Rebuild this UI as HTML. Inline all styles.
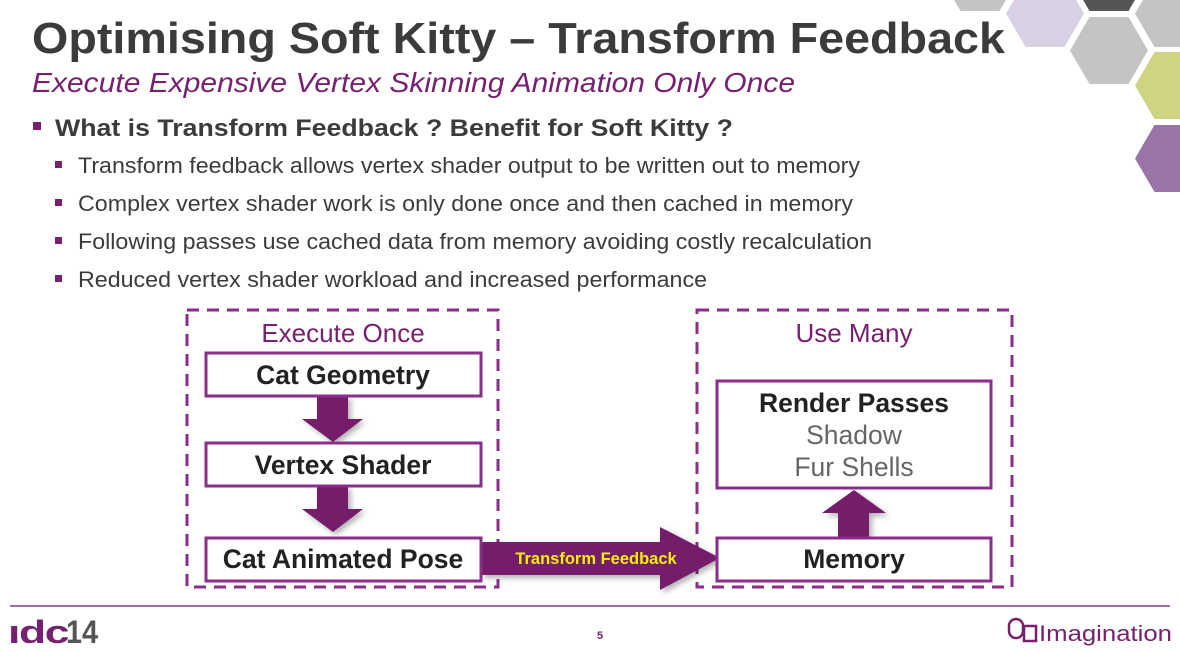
<!DOCTYPE html>
<html><head><meta charset="utf-8"><style>
html,body{margin:0;padding:0;background:#fff;}
svg{display:block;font-family:"Liberation Sans",Arial,sans-serif;}
</style></head><body>
<svg width="1180" height="652" viewBox="0 0 1180 652" xmlns="http://www.w3.org/2000/svg">
<defs>
<polygon id="hx" points="19.5,0 58.5,0 78,33.5 58.5,67 19.5,67 0,33.5"/>
<filter id="sh" x="-30%" y="-30%" width="160%" height="160%"><feDropShadow dx="3" dy="3" stdDeviation="3" flood-color="#000" flood-opacity="0.3"/></filter>
</defs>
<use href="#hx" x="941" y="-56" fill="#c4c4c4"/>
<use href="#hx" x="1006" y="-20" fill="#d9d0e3"/>
<use href="#hx" x="1070" y="-56" fill="#555"/>
<use href="#hx" x="1070" y="17" fill="#c4c4c4"/>
<use href="#hx" x="1135" y="-20" fill="#c4c4c4"/>
<use href="#hx" x="1135" y="52" fill="#cfd483"/>
<use href="#hx" x="1135" y="125" fill="#9974a8"/>

<text x="32" y="53" font-size="44" font-weight="bold" fill="#3b3b3b" textLength="973" lengthAdjust="spacingAndGlyphs">Optimising Soft Kitty – Transform Feedback</text>
<text x="32" y="92" font-size="28" font-style="italic" fill="#76206f" textLength="763" lengthAdjust="spacingAndGlyphs">Execute Expensive Vertex Skinning Animation Only Once</text>
<rect x="33" y="122" width="8" height="8" fill="#76206f"/>
<text x="55" y="136" font-size="24" font-weight="bold" fill="#3b3b3b" textLength="678" lengthAdjust="spacingAndGlyphs">What is Transform Feedback ? Benefit for Soft Kitty ?</text>
<g fill="#76206f"><rect x="55" y="161" width="7" height="7"/><rect x="55" y="199" width="7" height="7"/><rect x="55" y="237" width="7" height="7"/><rect x="55" y="275" width="7" height="7"/></g>
<g font-size="22" fill="#3b3b3b">
<text x="78" y="173" textLength="782" lengthAdjust="spacingAndGlyphs">Transform feedback allows vertex shader output to be written out to memory</text>
<text x="78" y="211" textLength="775" lengthAdjust="spacingAndGlyphs">Complex vertex shader work is only done once and then cached in memory</text>
<text x="78" y="249" textLength="794" lengthAdjust="spacingAndGlyphs">Following passes use cached data from memory avoiding costly recalculation</text>
<text x="78" y="287" textLength="629" lengthAdjust="spacingAndGlyphs">Reduced vertex shader workload and increased performance</text>
</g>

<g fill="none" stroke="#8a2e8a" stroke-width="3" stroke-dasharray="12,8">
<rect x="187" y="310" width="311" height="277"/>
<rect x="697" y="310" width="315" height="277"/>
</g>
<text x="343" y="342" font-size="26" fill="#76206f" text-anchor="middle">Execute Once</text>
<text x="854" y="342" font-size="26" fill="#76206f" text-anchor="middle">Use Many</text>

<g fill="#741a6b" filter="url(#sh)">
<polygon points="317,396 348,396 348,419 363,419 333,442 302,419 317,419"/>
<polygon points="317,486 348,486 348,509 363,509 333,532 302,509 317,509"/>
<polygon points="481,542 660,542 660,527 720,558 660,590 660,575 481,575"/>
<polygon points="838,537 869,537 869,513 886,513 854,490 822,513 838,513"/>
</g>
<text x="596" y="564" font-size="16.5" font-weight="bold" fill="#f5f000" text-anchor="middle">Transform Feedback</text>

<g fill="#fff" stroke="#8a2e8a" stroke-width="3">
<rect x="206" y="353" width="275" height="43"/>
<rect x="206" y="443" width="275" height="43"/>
<rect x="206" y="538" width="275" height="43"/>
<rect x="717" y="381" width="274" height="107"/>
<rect x="717" y="538" width="274" height="43"/>
</g>
<g font-size="26.5" font-weight="bold" fill="#222" text-anchor="middle">
<text x="343" y="384">Cat Geometry</text>
<text x="343" y="474">Vertex Shader</text>
<text x="343" y="568">Cat Animated Pose</text>
<text x="854" y="412">Render Passes</text>
<text x="854" y="568">Memory</text>
</g>
<g font-size="26.5" fill="#666" text-anchor="middle">
<text x="854" y="444">Shadow</text>
<text x="854" y="476">Fur Shells</text>
</g>

<line x1="10" y1="606" x2="1170" y2="606" stroke="#8a3a8a" stroke-width="1.5"/>
<text x="8" y="643" font-size="32" font-weight="bold" fill="#76206f" textLength="60" lengthAdjust="spacingAndGlyphs" letter-spacing="-1">ıdc</text>
<text x="66" y="643" font-size="32" font-weight="bold" fill="#555" textLength="32" lengthAdjust="spacingAndGlyphs">14</text>
<text x="600" y="639" font-size="11" font-weight="bold" fill="#76206f" text-anchor="middle">5</text>
<rect x="1009" y="619" width="14" height="19" rx="7" fill="none" stroke="#76206f" stroke-width="2.5"/>
<rect x="1024" y="626" width="12" height="15" fill="none" stroke="#76206f" stroke-width="2.5"/>
<text x="1039" y="641" font-size="22" fill="#76206f" textLength="133" lengthAdjust="spacingAndGlyphs">Imagination</text>
</svg>
</body></html>
